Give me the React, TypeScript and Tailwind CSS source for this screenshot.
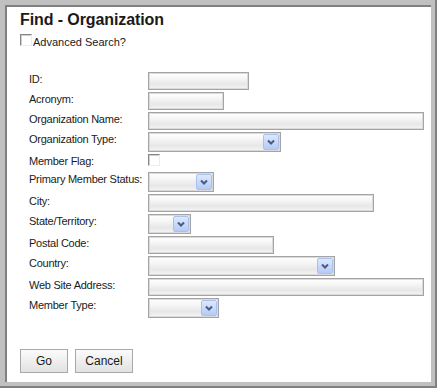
import React from 'react';

const font = "font-['Liberation_Sans',Arial,sans-serif]";

const fieldBg =
  'bg-[linear-gradient(to_bottom,#ffffff_0%,#f7f7f7_30%,#e7e7e7_70%,#f5f5f5_100%)] border border-[#a4a4a4] shadow-[inset_0_0_0_1px_#dadada]';

function TextBox({ width }: { width: number }) {
  return <div className={`h-[18px] ${fieldBg}`} style={{ width }} />;
}

function SelectBox({ width }: { width: number }) {
  return (
    <div className={`h-[20px] flex items-center justify-end pr-[1px] ${fieldBg}`} style={{ width }}>
      <div className="w-[16px] h-[16px] rounded-[2px] border border-[#a9c1ef] bg-[linear-gradient(to_bottom,#dce8fe,#b5cbf6)] flex items-center justify-center">
        <svg width="8" height="6" viewBox="0 0 8 6">
          <path d="M1 1.5 L4 4.5 L7 1.5" fill="none" stroke="#4a5b7c" strokeWidth="2" />
        </svg>
      </div>
    </div>
  );
}

function CheckBox() {
  return (
    <div className="w-[12px] h-[12px] bg-white border border-t-[#858585] border-l-[#858585] border-r-[#ececec] border-b-[#ececec] shadow-[inset_1px_1px_0_#d0d0d0]" />
  );
}

const rows: { label: string; kind: 'text' | 'select' | 'check'; width?: number }[] = [
  { label: 'ID:', kind: 'text', width: 101 },
  { label: 'Acronym:', kind: 'text', width: 76 },
  { label: 'Organization Name:', kind: 'text', width: 276 },
  { label: 'Organization Type:', kind: 'select', width: 133 },
  { label: 'Member Flag:', kind: 'check' },
  { label: 'Primary Member Status:', kind: 'select', width: 66 },
  { label: 'City:', kind: 'text', width: 226 },
  { label: 'State/Territory:', kind: 'select', width: 43 },
  { label: 'Postal Code:', kind: 'text', width: 126 },
  { label: 'Country:', kind: 'select', width: 187 },
  { label: 'Web Site Address:', kind: 'text', width: 276 },
  { label: 'Member Type:', kind: 'select', width: 71 },
];

function Button({ label, width }: { label: string; width: number }) {
  return (
    <button
      className="h-[24px] border border-[#a8a8a8] bg-[linear-gradient(to_bottom,#fbfbfb,#e2e2e2)] text-[12px] text-[#1a1a1a]"
      style={{ width }}
    >
      {label}
    </button>
  );
}

export default function App() {
  return (
    <div className={`w-[437px] h-[388px] bg-[#c0c0c0] border-r-2 border-b-2 border-[#808080] pt-[5px] pl-[5px] pr-[4px] pb-[4px] ${font}`}>
      <div className="h-full bg-white border-t-2 border-l-2 border-[#808080] pt-[3px] pl-[13px] flex flex-col">
        <h1 className="h-[20px] leading-[20px] text-[16px] font-bold text-[#1a1a1a] tracking-[-0.1px]">Find - Organization</h1>

        <div className="mt-[4px] h-[15px] flex items-start">
          <CheckBox />
          <span className="mt-[2px] ml-[1px] text-[11px] leading-[13px] text-[#1a1a1a]">Advanced Search?</span>
        </div>

        <div className="mt-[23px] pl-[9px] flex flex-col gap-[2px]">
          {rows.map((r) => (
            <div
              key={r.label}
              className={`flex items-start ${r.kind === 'check' ? 'h-[16px]' : r.kind === 'select' ? 'h-[20px]' : 'h-[18px]'}`}
            >
              <div className="w-[119px] shrink-0 pt-[1px] text-[11px] leading-[13px] tracking-[-0.25px] text-[#1a1a1a]">{r.label}</div>
              {r.kind === 'text' && <TextBox width={r.width!} />}
              {r.kind === 'select' && <SelectBox width={r.width!} />}
              {r.kind === 'check' && <CheckBox />}
            </div>
          ))}
        </div>

        <div className="mt-[31px] flex gap-[7px]">
          <Button label="Go" width={48} />
          <Button label="Cancel" width={58} />
        </div>
      </div>
    </div>
  );
}
